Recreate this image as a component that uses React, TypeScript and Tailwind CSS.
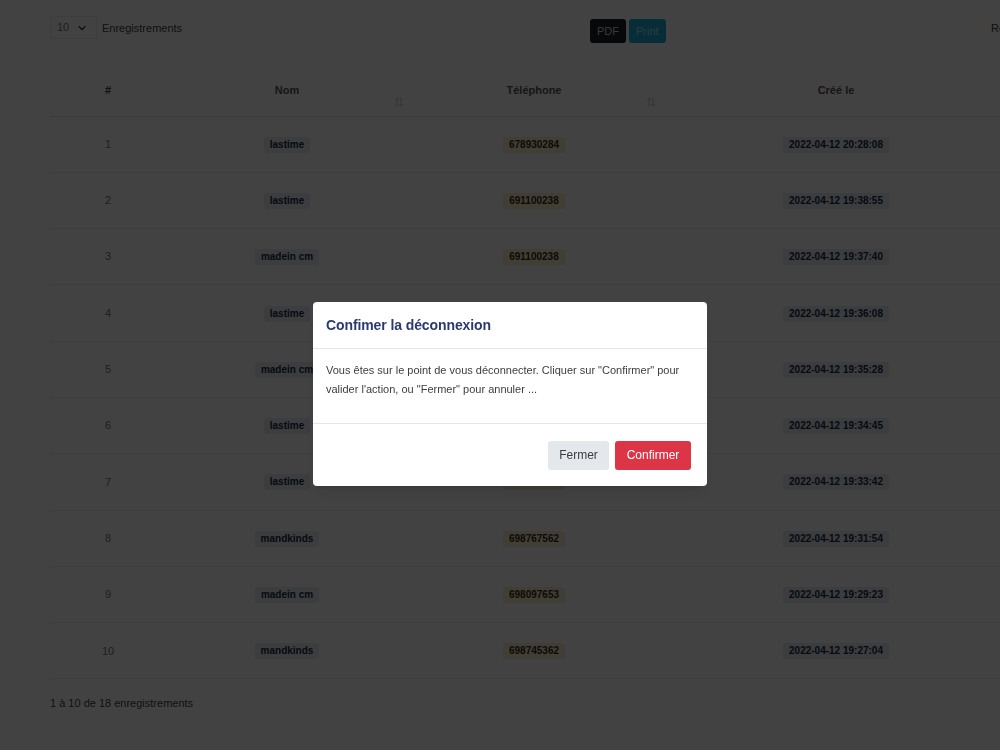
import { ChevronDown } from "lucide-react"

type Row = {
  id: number
  name: string
  phone: string
  createdAt: string
}

const rows: Row[] = [
  { id: 1, name: "lastime", phone: "678930284", createdAt: "2022-04-12 20:28:08" },
  { id: 2, name: "lastime", phone: "691100238", createdAt: "2022-04-12 19:38:55" },
  { id: 3, name: "madein cm", phone: "691100238", createdAt: "2022-04-12 19:37:40" },
  { id: 4, name: "lastime", phone: "691100238", createdAt: "2022-04-12 19:36:08" },
  { id: 5, name: "madein cm", phone: "691100238", createdAt: "2022-04-12 19:35:28" },
  { id: 6, name: "lastime", phone: "691100238", createdAt: "2022-04-12 19:34:45" },
  { id: 7, name: "lastime", phone: "691100238", createdAt: "2022-04-12 19:33:42" },
  { id: 8, name: "mandkinds", phone: "698767562", createdAt: "2022-04-12 19:31:54" },
  { id: 9, name: "madein cm", phone: "698097653", createdAt: "2022-04-12 19:29:23" },
  { id: 10, name: "mandkinds", phone: "698745362", createdAt: "2022-04-12 19:27:04" },
]

function SortIcon() {
  return (
    <svg viewBox="0 0 10 12" className="absolute right-1 bottom-2 h-3 w-2.5 text-[#c8c8c8]" fill="none" stroke="currentColor" strokeWidth="1">
      <path d="M3 11V2M1 4l2-2 2 2" />
      <path d="M7 1v9M5 8l2 2 2-2" />
    </svg>
  )
}

function Badge({ tone, children }: { tone: "slate" | "amber"; children: React.ReactNode }) {
  return (
    <span
      className={`inline-block rounded-[3px] px-[6px] py-[2px] text-[10px] font-bold leading-[12px] ${
        tone === "amber" ? "bg-[#fbeed2] text-[#3a2d12]" : "bg-[#e4eaf2] text-[#1b2a45]"
      }`}
    >
      {children}
    </span>
  )
}

function LogoutModal() {
  return (
    <div className="fixed inset-0 flex items-start justify-center bg-[rgba(0,0,0,0.74)] pt-[302px] pl-[20px]">
      <div className="w-[394px] overflow-hidden rounded-[4px] bg-white shadow-lg">
        <div className="flex h-[47px] items-center border-b border-[#e6e6e6] px-[13px]">
          <h5 className="text-[14px] font-bold tracking-[-0.1px] text-[#2a3a6e]">Confimer la déconnexion</h5>
        </div>
        <div className="h-[75px] border-b border-[#e6e6e6] px-[13px] pt-[12px] text-[11px] leading-[19px] text-[#3d3d3d]">
          Vous êtes sur le point de vous déconnecter. Cliquer sur "Confirmer" pour valider l'action, ou "Fermer" pour annuler ...
        </div>
        <div className="flex h-[62px] items-center justify-end gap-[6px] pr-[16px]">
          <button type="button" className="h-[29px] w-[61px] rounded-[3px] bg-[#e4e8ec] text-[12px] text-[#3a3d41]">
            Fermer
          </button>
          <button type="button" className="h-[29px] w-[76px] rounded-[3px] bg-[#dc3545] text-[12px] text-white">
            Confirmer
          </button>
        </div>
      </div>
    </div>
  )
}

export default function App() {
  return (
    <div className="relative h-[750px] w-[1000px] overflow-hidden bg-white font-['Liberation_Sans',Arial,sans-serif] text-[#212529]">
      <div className="w-[1150px] pl-[50px]">
        {/* toolbar */}
        <div className="flex items-start pt-[16px]">
          <div className="flex w-[540px] items-start gap-[5px]">
            <div className="flex h-[23px] w-[47px] items-center justify-between border border-[#ececec] pr-[8px] pl-[6px] text-[11px] text-[#777]">
              10
              <ChevronDown className="h-3 w-3 text-[#333]" strokeWidth={2.5} />
            </div>
            <span className="pt-[4px] text-[11px] text-[#444]">Enregistrements</span>
          </div>
          <div className="flex w-[401px] gap-[3px] pt-[3px]">
            <button type="button" className="h-[24px] rounded-[3px] bg-[#1c1f24] px-[7px] text-[11px] text-[#ddd]">
              PDF
            </button>
            <button type="button" className="h-[24px] rounded-[3px] bg-[#1eb3d6] px-[7px] text-[11px] text-[#9fe2f2]">
              Print
            </button>
          </div>
          <span className="pt-[4px] text-[11px] text-[#444]">Rechercher :</span>
        </div>

        {/* table */}
        <table className="mt-[22px] w-[1100px] table-fixed border-collapse text-[11px]">
          <colgroup>
            <col className="w-[116px]" />
            <col className="w-[242px]" />
            <col className="w-[252px]" />
            <col className="w-[352px]" />
            <col />
          </colgroup>
          <thead>
            <tr className="h-[51px] border-b border-[#e4e4e4]">
              <th className="relative text-[11px] font-bold text-[#444]">#</th>
              <th className="relative text-[11px] font-bold text-[#555]">
                Nom
                <SortIcon />
              </th>
              <th className="relative text-[11px] font-bold text-[#555]">
                Téléphone
                <SortIcon />
              </th>
              <th className="relative text-[11px] font-bold text-[#555]">Créé le</th>
              <th />
            </tr>
          </thead>
          <tbody>
            {rows.map((r) => (
              <tr key={r.id} className="h-[56.3px] border-b border-[#ececec]">
                <td className="text-center text-[11px] text-[#777]">{r.id}</td>
                <td className="text-center">
                  <Badge tone="slate">{r.name}</Badge>
                </td>
                <td className="text-center">
                  <Badge tone="amber">{r.phone}</Badge>
                </td>
                <td className="text-center">
                  <Badge tone="slate">{r.createdAt}</Badge>
                </td>
                <td />
              </tr>
            ))}
          </tbody>
        </table>

        <p className="mt-[16px] text-[11px] text-[#444]">1 à 10 de 18 enregistrements</p>
      </div>

      <LogoutModal />
    </div>
  )
}
